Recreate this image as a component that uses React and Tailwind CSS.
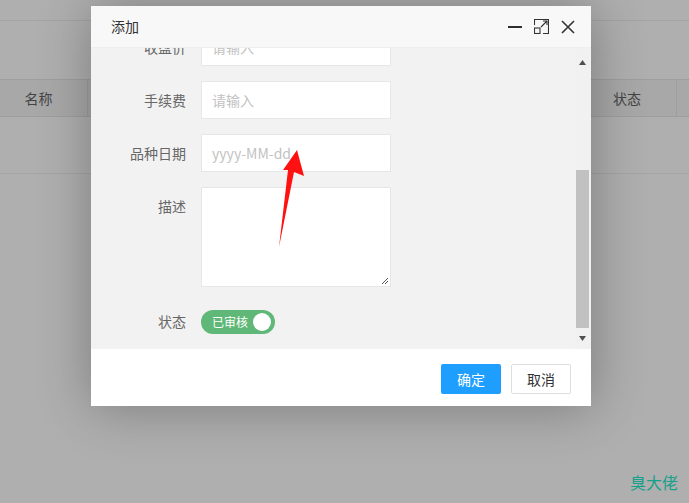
import React from "react";

const font = { fontFamily: '"Noto Sans CJK SC", "Noto Sans", sans-serif' };

function Row({ label, children, h = 38 }) {
  return (
    <div className="flex mb-[15px]">
      <div className="w-[110px] shrink-0 pr-[15px] text-right text-[14px] text-[#666] leading-[38px]">{label}</div>
      <div style={{ height: h }}>{children}</div>
    </div>
  );
}

function Input({ placeholder }) {
  return (
    <div className="w-[190px] h-[38px] border border-[#e6e6e6] bg-white pl-[10px] text-[14px] leading-[36px] text-[#c2c2c2]">
      {placeholder}
    </div>
  );
}

export default function App() {
  return (
    <div className="relative w-[689px] h-[503px] overflow-hidden bg-[#afafaf]" style={font}>
      {/* background page */}
      <div className="h-[21px] border-b border-[#a4a4a4]" />
      <div className="h-[58px]" />
      <div className="flex h-[38px] bg-[#a8a8a8] border-y border-[#9e9e9e] text-[14px] text-[#444]">
        <div className="w-[88px] border-r border-[#9e9e9e] flex items-center justify-center pr-[10px]">名称</div>
        <div className="flex-1" />
        <div className="w-[86px] flex items-center pl-[23px]">状态</div>
        <div className="w-[13px] border-l border-[#9e9e9e]" />
      </div>
      <div className="h-[57px] border-b border-[#a4a4a4]" />
      <div className="absolute right-[11px] bottom-[9px] text-[16px] text-[#17a08a]">臭大佬</div>

      {/* dialog */}
      <div className="absolute left-[91px] top-[6px] w-[500px] h-[400px] bg-white flex flex-col shadow-[1px_1px_50px_rgba(0,0,0,0.3)]">
        <div className="h-[42px] shrink-0 bg-[#f8f8f8] border-b border-[#eee] flex items-center pl-[20px] pr-[16px] text-[14px] text-[#333]">
          <span className="flex-1">添加</span>
          <div className="flex items-center gap-[12px]">
            <svg width="14" height="14" viewBox="0 0 14 14">
              <rect x="0" y="6" width="14" height="2" fill="#2e2e2e" />
            </svg>
            <svg width="15" height="15" viewBox="0 0 15 15" fill="none" stroke="#333" strokeWidth="1.1">
              <path d="M0.5 6 V0.5 H14.5 V14.5 H9" />
              <rect x="0.5" y="9" width="5.5" height="5.5" />
              <path d="M7 8 L13 2 M9 2 H13 V6" />
            </svg>
            <svg width="14" height="14" viewBox="0 0 14 14" stroke="#333" strokeWidth="1.6">
              <path d="M1 1 L13 13 M13 1 L1 13" />
            </svg>
          </div>
        </div>
        <div className="relative h-[301px] bg-[#f2f2f2] overflow-hidden">
          <div className="-mt-[20px]">
            <Row label="收盘价"><Input placeholder="请输入" /></Row>
            <Row label="手续费"><Input placeholder="请输入" /></Row>
            <Row label="品种日期"><Input placeholder="yyyy-MM-dd" /></Row>
            <Row label="描述" h={100}>
              <div className="relative w-[190px] h-[100px] border border-[#e6e6e6] bg-white">
                <svg className="absolute right-[1px] bottom-[1px]" width="8" height="8" viewBox="0 0 8 8" stroke="#555" strokeWidth="1">
                  <path d="M1 7 L7 1 M4 7 L7 4" />
                </svg>
              </div>
            </Row>
            <div className="flex">
              <div className="w-[110px] shrink-0 pr-[15px] text-right text-[14px] text-[#666] leading-[38px]">状态</div>
              <div className="pt-[8px]">
                <div className="flex items-center w-[74px] h-[24px] rounded-full bg-[#5fb878] pl-[11px] pr-[4px]">
                  <span className="text-[12px] text-white flex-1 leading-none">已审核</span>
                  <span className="w-[18px] h-[18px] rounded-full bg-white" />
                </div>
              </div>
            </div>
          </div>
          {/* scrollbar */}
          <div className="absolute right-[1px] top-0 w-[15px] h-full bg-[#f1f1f1] flex flex-col items-center">
            <div className="h-[17px] flex items-end justify-center">
              <svg width="7" height="5" viewBox="0 0 7 5"><path d="M0 5 L3.5 0 L7 5 Z" fill="#505050" /></svg>
            </div>
            <div className="h-[105px]" />
            <div className="w-[13px] h-[158px] bg-[#c1c1c1]" />
            <div className="flex-1 flex items-center justify-center">
              <svg width="7" height="5" viewBox="0 0 7 5"><path d="M0 0 L3.5 5 L7 0 Z" fill="#505050" /></svg>
            </div>
          </div>
        </div>
        <div className="flex-1 bg-white flex justify-end items-start pt-[15px] pr-[20px] gap-[10px]">
          <button className="w-[60px] h-[30px] rounded-[2px] bg-[#1e9fff] text-white text-[14px]">确定</button>
          <button className="w-[60px] h-[30px] rounded-[2px] bg-white border border-[#dedede] text-[#333] text-[14px]">取消</button>
        </div>
      </div>

      {/* red annotation arrow */}
      <svg className="absolute left-0 top-0 pointer-events-none" width="689" height="503">
        <polygon points="297,150 304,176 294,172 279,247 288,170 283,170" fill="#ff1111" />
      </svg>
    </div>
  );
}
